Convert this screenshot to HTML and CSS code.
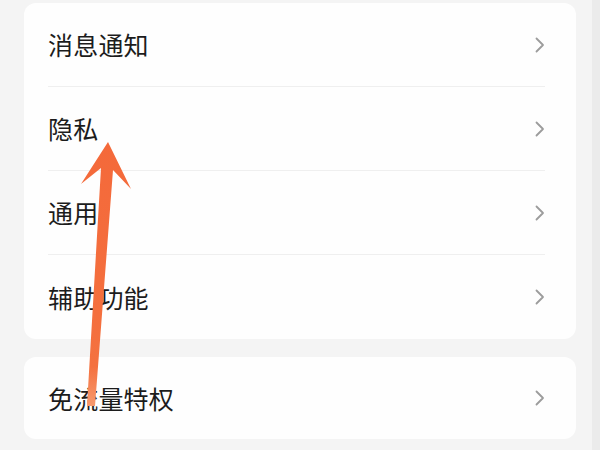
FILE: index.html
```html
<!DOCTYPE html>
<html lang="zh-CN">
<head>
<meta charset="utf-8">
<link rel="stylesheet" href="styles.css">
</head>
<body>
<div class="page">
  <div class="card">
    <div class="row"><span class="label">消息通知</span><svg class="chev" viewBox="0 0 10 16"><path d="M1.5 1.5 L8 8 L1.5 14.5"/></svg></div>
    <div class="row"><span class="label">隐私</span><svg class="chev" viewBox="0 0 10 16"><path d="M1.5 1.5 L8 8 L1.5 14.5"/></svg></div>
    <div class="row"><span class="label">通用</span><svg class="chev" viewBox="0 0 10 16"><path d="M1.5 1.5 L8 8 L1.5 14.5"/></svg></div>
    <div class="row last"><span class="label">辅助功能</span><svg class="chev" viewBox="0 0 10 16"><path d="M1.5 1.5 L8 8 L1.5 14.5"/></svg></div>
  </div>
  <div class="card card2">
    <div class="row last"><span class="label">免流量特权</span><svg class="chev" viewBox="0 0 10 16"><path d="M1.5 1.5 L8 8 L1.5 14.5"/></svg></div>
  </div>
</div>
<svg class="arrow" viewBox="0 0 600 450" width="600" height="450">
  <defs>
    <linearGradient id="ag" x1="0" y1="0" x2="0" y2="1">
      <stop offset="0" stop-color="#f4693a"/>
      <stop offset="0.85" stop-color="#f4713f"/>
      <stop offset="1" stop-color="#f79a6e"/>
    </linearGradient>
  </defs>
  <polygon fill="url(#ag)" points="108,142 131,189 113,170 95,406 87,406 101,168 81,184"/>
</svg>
</body>
</html>
```
FILE: styles.css
```css
html, body {
  margin: 0;
  padding: 0;
}
body {
  width: 600px;
  height: 450px;
  overflow: hidden;
  background: linear-gradient(to right, #f4f4f4 592px, #ebebeb 592px);
  font-family: "Noto Sans CJK SC", "Noto Sans", sans-serif;
  position: relative;
}
.page {
  padding: 3px 24px 0 24px;
  width: 552px;
  display: flex;
  flex-direction: column;
  gap: 18px;
}
.card {
  background: #fefefe;
  border-radius: 12px;
  display: flex;
  flex-direction: column;
}
.row {
  height: 83px;
  margin: 0 31px 0 24px;
  border-bottom: 1px solid #efefef;
  display: flex;
  align-items: center;
  justify-content: space-between;
}
.row.last {
  border-bottom: none;
  height: 84px;
}
.card2 .row {
  height: 82px;
}
.label {
  font-size: 25px;
  color: #1c1c1c;
  line-height: 1;
  letter-spacing: 0.2px;
}
.chev {
  width: 10px;
  height: 16px;
  fill: none;
  stroke: #9c9c9c;
  stroke-width: 1.8;
  stroke-linecap: round;
  stroke-linejoin: round;
}
.arrow {
  position: absolute;
  left: 0;
  top: 0;
  pointer-events: none;
}
```
